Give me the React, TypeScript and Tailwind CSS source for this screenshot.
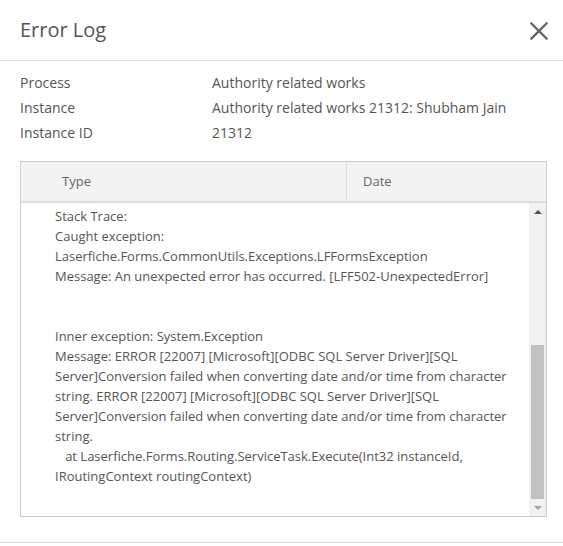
import React from "react";

const info = [
  { label: "Process", value: "Authority related works" },
  { label: "Instance", value: "Authority related works 21312: Shubham Jain" },
  { label: "Instance ID", value: "21312" },
];

const lines = [
  "Stack Trace:",
  "Caught exception:",
  "Laserfiche.Forms.CommonUtils.Exceptions.LFFormsException",
  "Message: An unexpected error has occurred. [LFF502-UnexpectedError]",
  "",
  "",
  "Inner exception: System.Exception",
  "Message: ERROR [22007] [Microsoft][ODBC SQL Server Driver][SQL",
  "Server]Conversion failed when converting date and/or time from character",
  "string. ERROR [22007] [Microsoft][ODBC SQL Server Driver][SQL",
  "Server]Conversion failed when converting date and/or time from character",
  "string.",
  "   at Laserfiche.Forms.Routing.ServiceTask.Execute(Int32 instanceId,",
  "IRoutingContext routingContext)",
];

function Scrollbar() {
  return (
    <div className="flex w-[17px] flex-col bg-[#f1f1f1]">
      <div className="flex h-[17px] items-center justify-center">
        <div className="h-0 w-0 border-x-[4px] border-b-[4px] border-x-transparent border-b-[#505050]" />
      </div>
      <div className="flex flex-1 flex-col px-[2px]">
        <div className="mt-[125px] flex-1 bg-[#c1c1c1]" />
      </div>
      <div className="flex h-[17px] items-center justify-center">
        <div className="h-0 w-0 border-x-[4px] border-t-[4px] border-x-transparent border-t-[#a3a3a3]" />
      </div>
    </div>
  );
}

export default function App() {
  return (
    <div className="h-[546px] w-[563px] bg-white font-['Open_Sans',sans-serif] text-[#555]">
      <header className="flex h-[61px] items-center justify-between border-b border-[#ddd] pl-5 pr-[15px]">
        <h1 className="text-[20px] text-[#555]">Error Log</h1>
        <button className="p-0">
          <svg width="18" height="18" viewBox="0 0 18 18" className="mt-px">
            <path d="M1.5 1.5 L16.5 16.5 M16.5 1.5 L1.5 16.5" stroke="#666" strokeWidth="2.4" strokeLinecap="square" />
          </svg>
        </button>
      </header>

      <div className="grid grid-cols-[192px_1fr] px-5 pt-[9px] text-sm leading-[25px]">
        {info.map((row) => (
          <React.Fragment key={row.label}>
            <div>{row.label}</div>
            <div>{row.value}</div>
          </React.Fragment>
        ))}
      </div>

      <div className="ml-5 mr-4 mt-[16px] border border-[#ccc]">
        <div className="flex h-[41px] border-b-2 border-[#ddd] bg-[#f3f3f3] text-[13px] text-[#666]">
          <div className="flex w-[326px] items-center border-r border-[#ddd] pl-[41px]">Type</div>
          <div className="flex flex-1 items-center pl-4">Date</div>
        </div>
        <div className="flex h-[313px]">
          <div className="flex-1 overflow-hidden pl-[34px] pt-[3px] text-[13px] leading-[20px]">
            {lines.map((l, i) => (
              <div key={i} className="h-5 whitespace-pre">{l}</div>
            ))}
          </div>
          <Scrollbar />
        </div>
      </div>

      <div className="mt-[25px] border-t border-[#ddd]" />
    </div>
  );
}
